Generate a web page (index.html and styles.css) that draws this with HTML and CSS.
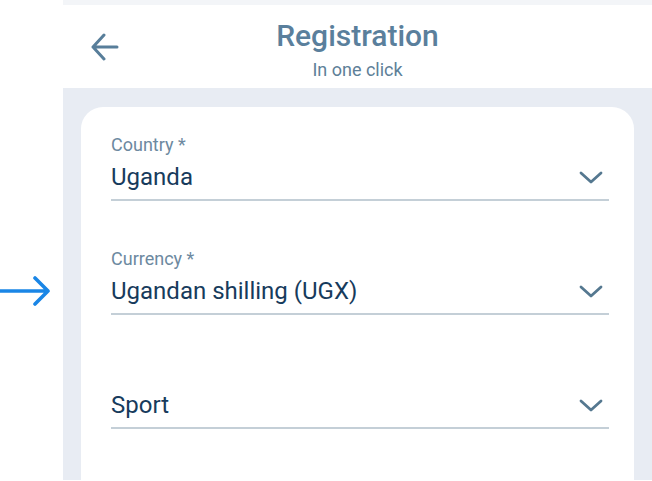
FILE: index.html
```html
<!DOCTYPE html>
<html lang="en">
<head>
<meta charset="utf-8">
<title>Registration</title>
<link rel="stylesheet" href="styles.css">
</head>
<body>
<div class="page">
  <div class="gutter">
    <svg class="pointer" width="52" height="32" viewBox="0 0 52 32" aria-hidden="true">
      <path d="M0 16H48M35 3L48 16L35 29" fill="none" stroke="#1a86e6" stroke-width="3.6" stroke-linecap="round" stroke-linejoin="round"/>
    </svg>
  </div>
  <div class="screen">
    <div class="status"></div>
    <header class="header">
      <button class="back" aria-label="Back">
        <svg width="30" height="28" viewBox="0 0 30 28">
          <path d="M27 14H3M14 2L3 14L14 26" fill="none" stroke="#587e9a" stroke-width="3" stroke-linecap="round" stroke-linejoin="round"/>
        </svg>
      </button>
      <div class="titles">
        <h1 class="title">Registration</h1>
        <p class="subtitle">In one click</p>
      </div>
    </header>
    <main class="content">
      <section class="card">
        <div class="field">
          <div class="label">Country *</div>
          <div class="control"><span class="value">Uganda</span><svg class="chev" width="24" height="14" viewBox="0 0 24 14"><path d="M2 2L12 11L22 2" fill="none" stroke="#557890" stroke-width="2.8" stroke-linecap="round" stroke-linejoin="round"/></svg></div>
        </div>
        <div class="field">
          <div class="label">Currency *</div>
          <div class="control"><span class="value">Ugandan shilling (UGX)</span><svg class="chev" width="24" height="14" viewBox="0 0 24 14"><path d="M2 2L12 11L22 2" fill="none" stroke="#557890" stroke-width="2.8" stroke-linecap="round" stroke-linejoin="round"/></svg></div>
        </div>
        <div class="field">
          <div class="label"></div>
          <div class="control"><span class="value">Sport</span><svg class="chev" width="24" height="14" viewBox="0 0 24 14"><path d="M2 2L12 11L22 2" fill="none" stroke="#557890" stroke-width="2.8" stroke-linecap="round" stroke-linejoin="round"/></svg></div>
        </div>
      </section>
    </main>
  </div>
</div>
</body>
</html>
```
FILE: styles.css
```css
* { box-sizing: border-box; }
html, body { margin: 0; padding: 0; background: #ffffff; }
body { font-family: Roboto, "Liberation Sans", sans-serif; }
.page { display: flex; width: 652px; height: 481px; position: relative; }
.gutter { width: 63px; flex: none; position: relative; }
.pointer { position: absolute; left: 0; top: 275px; }
.screen { width: 589px; height: 480px; overflow: hidden; display: flex; flex-direction: column; background: #e8ecf3; }
.status { height: 5px; background: #f3f5f8; flex: none; }
.header { height: 83px; background: #ffffff; flex: none; display: flex; align-items: flex-start; position: relative; }
.back { position: absolute; left: 26px; top: 27px; width: 32px; height: 30px; padding: 0; border: 0; background: none; display: flex; align-items: center; justify-content: center; }
.titles { flex: 1; text-align: center; padding-top: 13px; }
.title { margin: 0; font-size: 30px; line-height: 36px; font-weight: 500; color: #5a7f9c; }
.subtitle { margin: 5px 0 0; font-size: 18px; line-height: 22px; color: #5e7f98; }
.content { flex: 1; padding: 19px 18px 0; }
.card { background: #ffffff; border-radius: 22px 22px 0 0; height: 100%; padding: 28px 25px 0 30px; }
.field { margin-bottom: 48px; }
.label { font-size: 18px; line-height: 20px; color: #6d89a0; height: 20px; }
.control { margin-top: 7px; height: 39px; border-bottom: 2px solid #c4cfd7; display: flex; align-items: flex-start; justify-content: space-between; }
.value { font-size: 24px; line-height: 30px; color: #173b5c; }
.chev { margin-right: 6px; margin-top: 9px; }
```
